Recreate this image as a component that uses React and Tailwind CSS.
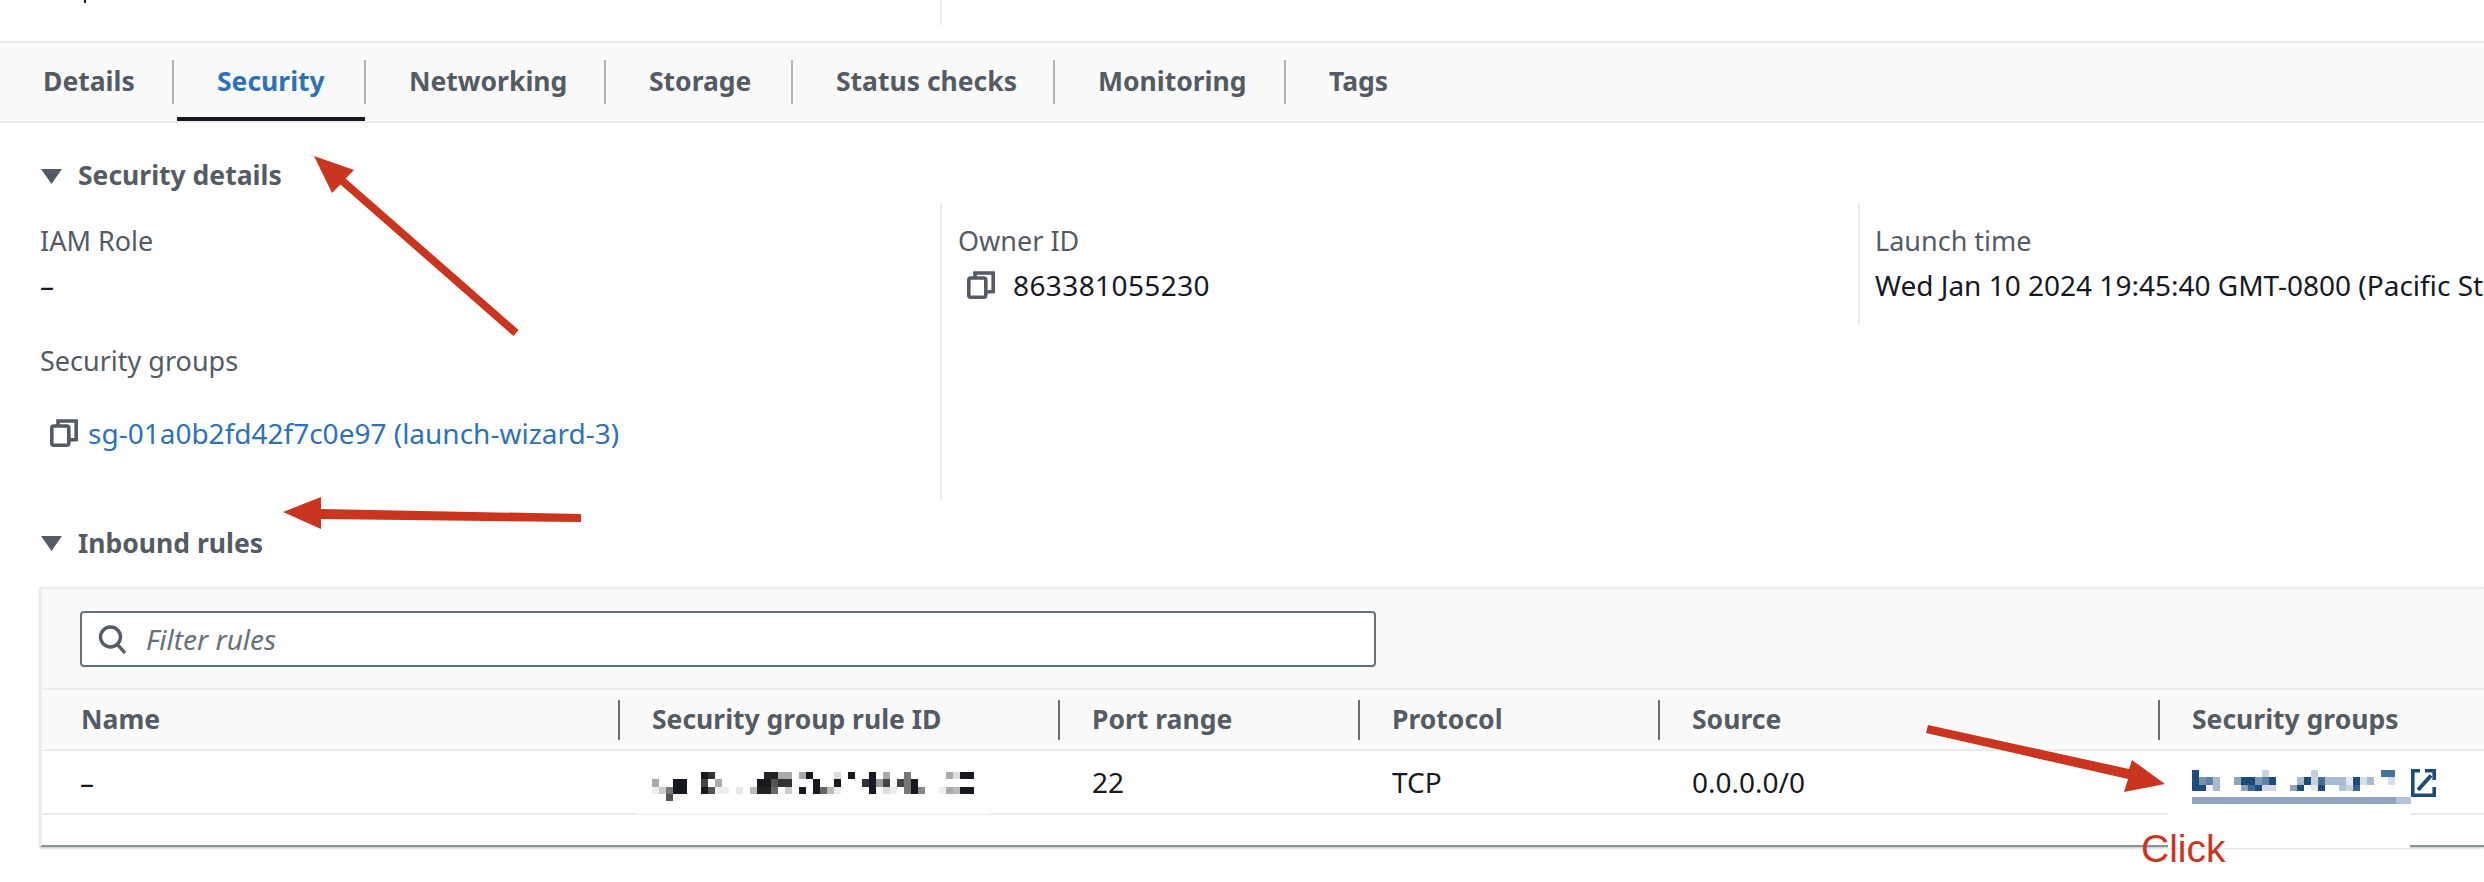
const F = "#16191f";

function CopyIcon() {
  return (
    <svg width="28" height="28" viewBox="0 0 28 28" fill="none" stroke="#545b64" strokeWidth="3.6" className="shrink-0">
      <rect x="1.8" y="7" width="17" height="19.2" rx="2" />
      <path d="M8 6V2H26.2V20.5L19 21" />
    </svg>
  );
}

function Caret() {
  return (
    <svg width="21" height="15" viewBox="0 0 21 15" className="shrink-0">
      <polygon points="0,0 21,0 10.5,15" fill="#545b64" />
    </svg>
  );
}

const tabs = [
  { t: "Details", w: 174, px: 43 },
  { t: "Security", w: 192, px: 43, active: true },
  { t: "Networking", w: 240, px: 43 },
  { t: "Storage", w: 187, px: 43 },
  { t: "Status checks", w: 262, px: 43 },
  { t: "Monitoring", w: 231, px: 43 },
  { t: "Tags", w: 200, px: 43, last: true },
];

function Tabs() {
  return (
    <div className="flex h-[82px] border-y-2 border-[#eaeded] bg-[#fafafa]">
      {tabs.map((tab) => (
        <div key={tab.t} className="relative flex items-center justify-between" style={{ width: tab.w, paddingLeft: tab.px }}>
          <span className={`pb-[3px] text-[26.5px] font-bold ${tab.active ? "text-[#2d72b8]" : "text-[#545b64]"}`}>{tab.t}</span>
          {!tab.last && <div className="h-[44px] w-[2px] bg-[#aab7b8]" />}
          {tab.active && <div className="absolute bottom-0 left-[3px] h-[4px] w-[188px] bg-[#16191f]" />}
        </div>
      ))}
    </div>
  );
}

function SectionHead({ children, low }) {
  return (
    <div className="flex h-[36px] items-center gap-[16px] pl-[41px]">
      <Caret />
      <span className={`text-[26.5px] font-bold text-[#545b64] ${low ? "pb-[1px]" : "pb-[3px]"}`}>{children}</span>
    </div>
  );
}

function Details() {
  return (
    <div className="flex items-start">
      <div className="ml-[40px] w-[900px] pt-[20px] pb-[48px]">
        <div className="text-[27px] text-[#545b64]">IAM Role</div>
        <div className="mt-[8px] text-[28px] text-[#16191f]">–</div>
        <div className="mt-[40px] text-[27px] text-[#545b64]">Security groups</div>
        <div className="mt-[36px] flex items-center gap-[10px] pl-[10px] text-[28px] text-[#2d72b8]">
          <CopyIcon />
          <span>sg-01a0b2fd42f7c0e97 (launch-wizard-3)</span>
        </div>
      </div>
      <div className="h-[296px] w-[918px] border-l-2 border-[#eaeded] pt-[20px] pl-[16px]">
        <div className="text-[27px] text-[#545b64]">Owner ID</div>
        <div className="mt-[8px] flex items-center gap-[18px] pl-[9px] text-[28px] tracking-[0.4px] text-[#16191f]">
          <CopyIcon />
          <span>863381055230</span>
        </div>
      </div>
      <div className="h-[122px] min-w-0 flex-1 overflow-hidden border-l-2 border-[#eaeded] pt-[20px] pl-[15px] whitespace-nowrap">
        <div className="text-[27px] text-[#545b64]">Launch time</div>
        <div className="mt-[8px] text-[28px] text-[#16191f]">Wed Jan 10 2024 19:45:40 GMT-0800 (Pacific Standard Time)</div>
      </div>
    </div>
  );
}

const darkPx = [
  [0,7,F],[0,8,"#333"],[0,16,"#222"],[0,17,"#222"],[0,18,"#aaa"],[0,19,"#aaa"],[0,21,"#aaa"],[0,22,F],[0,26,"#ddd"],[0,28,F],[0,31,F],[0,33,"#aaa"],[0,36,"#777"],[0,42,"#aaa"],[0,43,"#ddd"],[0,44,F],[0,45,F],
  [1,0,"#aaa"],[1,3,F],[1,4,F],[1,7,"#444"],[1,9,"#aaa"],[1,15,F],[1,16,F],[1,17,"#555"],[1,18,"#333"],[1,19,"#333"],[1,23,F],[1,26,F],[1,30,"#333"],[1,31,F],[1,32,"#999"],[1,33,"#444"],[1,35,"#444"],[1,36,"#777"],[1,37,F],
  [2,0,"#eee"],[2,1,"#ccc"],[2,2,"#777"],[2,3,F],[2,4,F],[2,7,F],[2,8,"#555"],[2,9,"#eee"],[2,10,"#eee"],[2,12,"#e8e8e8"],[2,14,"#bbb"],[2,15,"#222"],[2,16,"#222"],[2,17,"#666"],[2,19,"#ccc"],[2,21,F],[2,23,F],[2,24,"#666"],[2,25,"#bbb"],[2,26,"#eee"],[2,31,F],[2,33,"#ddd"],[2,34,"#eee"],[2,36,"#777"],[2,37,F],[2,38,"#888"],[2,41,"#eee"],[2,42,"#aaa"],[2,43,"#bbb"],[2,44,F],[2,45,F],
  [3,2,"#555"],[3,3,"#f5f5f5"],
];

const B = "#1f4b7a";
const bluePx = [
  [0,0,B],[0,10,"#c8d3e0"],[0,17,"#c0cedd"],[0,27,"#44709a"],[0,28,"#44709a"],
  [1,0,B],[1,1,"#7793b0"],[1,2,"#5f82a5"],[1,3,"#aabbcc"],[1,6,"#8fa5bd"],[1,7,B],[1,8,B],[1,9,"#7d97b3"],[1,10,"#5f82a5"],[1,11,B],[1,15,"#aabbcc"],[1,16,B],[1,17,"#c8d3e0"],[1,18,"#44709a"],[1,19,"#a9bbcd"],[1,20,"#a9bbcd"],[1,21,"#a9bbcd"],[1,22,"#e5eaf0"],[1,23,B],[1,24,"#d5dde7"],[1,25,"#aabbcc"],[1,28,"#d5dde7"],
  [2,0,B],[2,1,B],[2,2,"#eef1f5"],[2,3,"#aabbcc"],[2,7,"#8fa5bd"],[2,8,"#3d6690"],[2,9,B],[2,10,"#d0d8e4"],[2,11,"#d0d8e4"],[2,14,"#8fa5bd"],[2,15,B],[2,17,"#e5eaf0"],[2,18,B],[2,21,"#b5c5d5"],[2,22,"#c8d3e0"],[2,23,"#3a648e"],
];

function Pixels({ data, cols, rows }) {
  return (
    <svg width={cols * 7} height={rows * 7.33} viewBox={`0 0 ${cols * 7} ${rows * 7.33}`} className="block shrink-0" shapeRendering="crispEdges">
      {data.map(([r, c, col]) => (
        <rect key={`${r}-${c}`} x={c * 7} y={r * 7.33} width="7" height="7.33" fill={col} />
      ))}
    </svg>
  );
}

function HeaderCell({ children, first }) {
  return (
    <div className="flex items-center">
      {first ? <div className="w-[39px]" /> : <div className="mr-[32px] h-[40px] w-[2px] bg-[#687078]" />}
      <span className="pb-[1px] text-[26.5px] font-bold text-[#545b64]">{children}</span>
    </div>
  );
}

const COLS = "grid grid-cols-[576px_440px_300px_300px_500px_1fr]";

function RulesCard() {
  return (
    <div className="mt-[26px] ml-[40px] border-t-2 border-b-2 border-l-2 border-t-[#eaeded] border-b-[#879596] border-l-[#eaeded] shadow-[0_1px_2px_rgba(84,91,100,0.4)]">
      <div className="bg-[#fafafa] pt-[22px] pb-[21px] pl-[38px]">
        <div className="flex h-[56px] w-[1296px] items-center gap-[18px] rounded-[4px] border-2 border-[#687078] bg-white pl-[16px]">
          <svg width="30" height="29" viewBox="0 0 30 29" fill="none" stroke="#545b64" strokeWidth="3.4" className="shrink-0">
            <circle cx="12.5" cy="12" r="10" />
            <path d="M19.5 19.5L27 28" />
          </svg>
          <span className="text-[28px] text-[#687078] italic">Filter rules</span>
        </div>
      </div>
      <div className={`${COLS} h-[63px] items-center border-y-2 border-[#eaeded] bg-[#fafafa]`}>
        <HeaderCell first>Name</HeaderCell>
        <HeaderCell>Security group rule ID</HeaderCell>
        <HeaderCell>Port range</HeaderCell>
        <HeaderCell>Protocol</HeaderCell>
        <HeaderCell>Source</HeaderCell>
        <HeaderCell>Security groups</HeaderCell>
      </div>
      <div className={`${COLS} h-[64px] items-center border-b-2 border-[#eaeded] text-[28px] text-[#16191f]`}>
        <div className="pl-[38px]">–</div>
        <div className="relative pl-[34px]">
          <div className="mt-[10px]">
            <Pixels data={darkPx} cols={46} rows={4} />
          </div>
          <div className="absolute top-[48px] left-[19px] h-[4px] w-[353px] bg-white" />
        </div>
        <div className="pl-[34px]">22</div>
        <div className="pl-[34px]">TCP</div>
        <div className="pl-[34px]">0.0.0.0/0</div>
        <div className="relative pl-[34px]">
          <div className="mt-[10px] flex items-start">
            <div className="w-[219px]">
              <Pixels data={bluePx} cols={29} rows={3} />
              <div className="mt-[6px] flex h-[7px]">
                <div className="w-[204px] bg-[#8fa5bd]" />
                <div className="w-[15px] bg-[#b5c5d5]" />
              </div>
            </div>
            <svg width="25" height="28" viewBox="0 0 25 28" fill="none" stroke="#1f4b7a" strokeWidth="3.6" className="-mt-px shrink-0">
              <path d="M9 1.8H1.8V26.2H23.2V18" />
              <path d="M7 21L20 6.5" strokeWidth="4" />
              <path d="M14 1.8H23.2V11" />
            </svg>
          </div>
          <div className="absolute top-[52px] left-[10px] h-[36px] w-[242px] bg-white" />
        </div>
      </div>
      <div className="h-[30px]" />
    </div>
  );
}

function Annotations() {
  return (
    <svg width="2484" height="882" viewBox="0 0 2484 882" className="pointer-events-none absolute inset-0" fill="#c9351f">
      <polygon points="314,156 354,170 345.6,178.5 518.6,330 513.4,336 340.4,184.5 332,193" />
      <polygon points="283,512 321,497 321,509 581,514 581,522 321,519 321,529" />
      <polygon points="2165,784 2132,760 2129,769 1928,725 1926,733 2128,779 2124,792" />
    </svg>
  );
}

export default function App() {
  return (
    <div className="relative h-[882px] w-[2484px] overflow-hidden bg-white font-['Noto_Sans',sans-serif] text-[26px] leading-[36px]">
      <div className="flex h-[41px] items-start">
        <div className="ml-[84px] h-[3px] w-[2px] bg-[#16191f]" />
        <div className="ml-[854px] h-[25px] w-[2px] bg-[#eaeded]" />
      </div>
      <Tabs />
      <div className="pt-[35px]">
        <SectionHead>Security details</SectionHead>
      </div>
      <div className="mt-[9px]">
        <Details />
      </div>
      <div className="mt-[26px]">
        <SectionHead low>Inbound rules</SectionHead>
      </div>
      <RulesCard />
      <Annotations />
      <div className="absolute top-[825px] left-[2141px] font-['Liberation_Sans',sans-serif] text-[39px] leading-[48px] text-[#c9351f]">Click</div>
    </div>
  );
}
